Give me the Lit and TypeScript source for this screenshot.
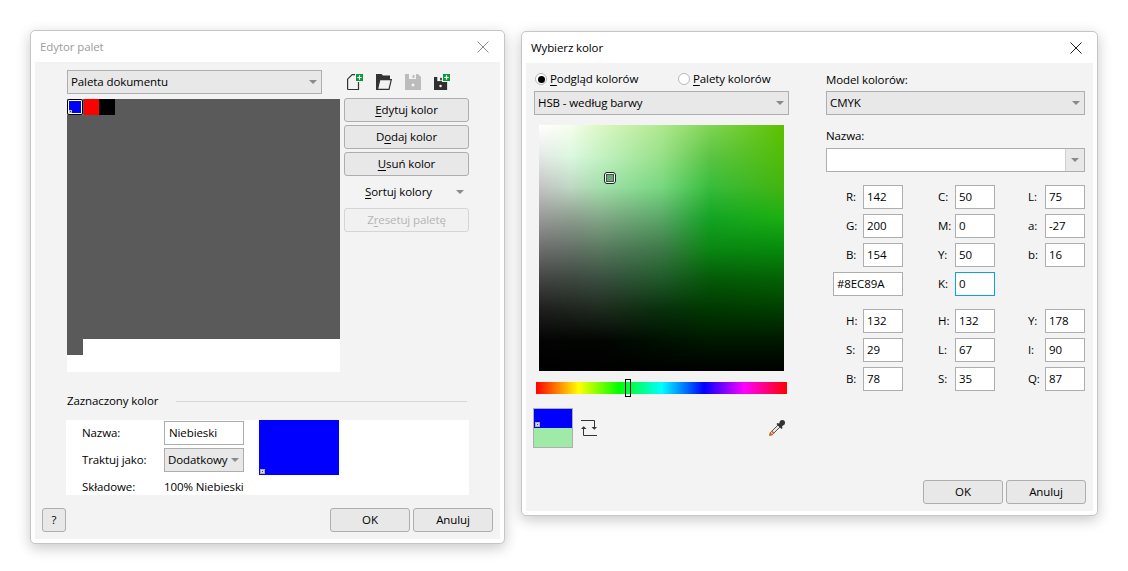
import { LitElement, html, css, svg } from 'lit';
import { customElement } from 'lit/decorators.js';

const closeIcon = (color: string) => html`<svg width="12" height="12" viewBox="0 0 12 12"><path d="M.5.5l11 11M11.5.5l-11 11" stroke=${color} fill="none"/></svg>`;

const plusBadge = svg`<rect x="9" y="0" width="7" height="7" fill="#0a9a3c"/><path d="M12.5 1.3v4.400M10.300 3.500h4.400" stroke="#fff" stroke-width="1.2"/>`;

const newIcon = html`<svg width="16" height="16" viewBox="0 0 16 16"><path d="M.6 15.500V5.200L5.200.6H8M11.500 8v7.500H.6" fill="none" stroke="#333" stroke-width="1.2"/>${plusBadge}</svg>`;
const openIcon = html`<svg width="16" height="16" viewBox="0 0 16 16"><path d="M0 16V0h5.500l1.500 1.500h7V5H4.500L2.500 16z" fill="#333"/><path d="M1.500 15.400L3.800 5.600h11.500l-2.300 9.800z" fill="#f3f3f3" stroke="#333" stroke-width="1.200"/></svg>`;
const floppy = (c: string, hole: string) => svg`<path d="M0 0h13l3 3v13H0z" fill=${c}/><rect x="4" y="0" width="7" height="5" fill=${hole}/><rect x="7.500" y="1" width="2" height="3" fill=${c}/><circle cx="8" cy="11" r="1.500" fill=${hole}/>`;
const saveIcon = html`<svg width="16" height="16" viewBox="0 0 16 16">${floppy('#bcbcbc', '#f3f3f3')}</svg>`;
const saveAsIcon = html`<svg width="16" height="16" viewBox="0 0 16 16"><g transform="translate(0 3) scale(.82)">${floppy('#2f2f2f', '#f3f3f3')}</g><rect x="8" y="0" width="8" height="8" fill="#f3f3f3"/>${plusBadge}</svg>`;

const swapIcon = html`<svg width="16" height="16" viewBox="0 0 16 16" fill="none" stroke="#333"><path d="M0 .5h13.500V7M16 15.500H2.500V9"/><path d="M10.500 7h5.500l-2.700 2.800zM0 9h5.500L2.700 6.200z" fill="#333" stroke="none"/></svg>`;
const pipetteIcon = html`<svg width="16" height="16" viewBox="0 0 16 16"><path d="M1 15l.7-2.800L9 5l2 2-7.300 7.300z" fill="#e4e4e4" stroke="#555"/><path d="M0 16l1-4 3 3z" fill="#d8611a"/><path d="M2 11.500l1-1 2.500 2.500-1 1z" fill="#d8611a"/><circle cx="13.300" cy="2.700" r="2.700" fill="#333"/><path d="M7.500 4l1-1 1.500.5 3-2.500 2.500 2.500-2.500 3 .5 1.500-1 1z" fill="#333"/></svg>`;

// colours read off the reference, interpolated across the picker square
const SV_XS = [0, 0.125, 0.25, 0.5, 0.7, 1];
const SV_ROWS: [number, string[]][] = [
  [0, ['ffffff', 'f6fdec', 'dcf6c4', 'b0e890', '80d454', '5cc000']],
  [0.125, ['e6e8e6', 'dcf8e0', 'c4f2c4', '98e088', '5cc444', '50bc08']],
  [0.25, ['c4c4c4', 'c0d8c4', 'a4e0ac', '78d880', '38bc3c', '44b410']],
  [0.375, ['9a9a9a', '8e9e90', '84a888', '5aa868', '14a424', '1cb012']],
  [0.5, ['6e6e6e', '667068', '5a7a60', '3f7a4a', '0a8812', '068c0c']],
  [0.625, ['444444', '3e4840', '3a4e40', '205a2a', '045a08', '046204']],
  [0.75, ['1e1e1e', '1e241e', '1e2a1e', '08300c', '003800', '003e00']],
  [0.88, ['030303', '020402', '020402', '001000', '001800', '001800']],
  [1, ['000000', '000000', '000000', '000000', '000000', '000000']],
];

function hexRgb(h: string): number[] {
  return [0, 2, 4].map((i) => parseInt(h.slice(i, i + 2), 16));
}

function segment(stops: number[], t: number): [number, number] {
  let i = 0;
  while (i < stops.length - 2 && t > stops[i + 1]) i++;
  return [i, (t - stops[i]) / (stops[i + 1] - stops[i])];
}

function paintSquare(canvas: HTMLCanvasElement) {
  const ctx = canvas.getContext('2d')!;
  const { width: w, height: h } = canvas;
  const img = ctx.createImageData(w, h);
  const grid = SV_ROWS.map((r) => r[1].map(hexRgb));
  const ys = SV_ROWS.map((r) => r[0]);
  for (let y = 0; y < h; y++) {
    const [ri, rt] = segment(ys, y / (h - 1));
    for (let x = 0; x < w; x++) {
      const [ci, ct] = segment(SV_XS, x / (w - 1));
      const p = (y * w + x) * 4;
      for (let k = 0; k < 3; k++) {
        const top = grid[ri][ci][k] * (1 - ct) + grid[ri][ci + 1][k] * ct;
        const bot = grid[ri + 1][ci][k] * (1 - ct) + grid[ri + 1][ci + 1][k] * ct;
        img.data[p + k] = top * (1 - rt) + bot * rt;
      }
      img.data[p + 3] = 255;
    }
  }
  ctx.putImageData(img, 0, 0);
}

@customElement('color-input')
export class ColorInput extends LitElement {
  static properties = { label: {}, value: {}, focused: { type: Boolean } };
  label = '';
  value = '';
  focused = false;

  static styles = css`
    :host {
      display: flex;
      justify-content: flex-end;
      align-items: center;
      height: 24px;
    }
    .lbl {
      width: 17px;
      white-space: nowrap;
    }
    .box {
      width: 40px;
      height: 24px;
      box-sizing: border-box;
      background: #fff;
      border: 1px solid #aeaeae;
      padding-left: 3px;
      line-height: 22px;
    }
    .box.focus {
      border-color: #0f9fe8;
    }
  `;

  render() {
    return html`<span class="lbl">${this.label}</span><div class="box ${this.focused ? 'focus' : ''}">${this.value}</div>`;
  }
}

@customElement('app-root')
export class AppRoot extends LitElement {
  static styles = css`
    :host {
      display: flex;
      align-items: flex-start;
      gap: 16px;
      width: 1128px;
      height: 571px;
      box-sizing: border-box;
      padding: 30px 0 0 30px;
      background: #fff;
      color: #000;
      font: 11.5px/16px 'Open Sans', 'Noto Sans', sans-serif;
      letter-spacing: -0.1px;
      overflow: hidden;
    }
    * {
      box-sizing: border-box;
    }
    u {
      text-underline-offset: 2px;
    }
    .dialog {
      flex: none;
      background: #fff;
      border: 1px solid #c6c6c6;
      border-radius: 5px;
      box-shadow: 0 4px 14px rgba(0, 0, 0, 0.22);
      padding: 0 4px 4px;
      display: flex;
      flex-direction: column;
    }
    .palette-dlg {
      width: 475px;
      height: 514px;
    }
    .picker-dlg {
      width: 577px;
      height: 485px;
      margin-top: 1px;
    }
    .title {
      height: 31px;
      flex: none;
      display: flex;
      align-items: center;
      justify-content: space-between;
      padding: 1px 11px 0 5px;
    }
    .title.off {
      color: #9c9c9c;
    }
    .body {
      flex: 1;
      background: #f3f3f3;
      position: relative;
      display: flex;
      flex-direction: column;
    }

    .btn,
    .select {
      background: #e8e8e8;
      border: 1px solid #aeaeae;
      height: 24px;
      display: flex;
      align-items: center;
    }
    .btn {
      width: 80px;
      justify-content: center;
      border-radius: 3px;
    }
    .btn.off {
      background: #f1f1f1;
      border-color: #d5d5d5;
      color: #b4b4b4;
    }
    .select {
      padding: 0 4px 0 3px;
      justify-content: space-between;
    }
    .arrow {
      width: 0;
      height: 0;
      border: 4px solid transparent;
      border-top: 4px solid #8a8a8a;
      border-bottom: 0;
      flex: none;
    }
    .footer {
      display: flex;
      gap: 3px;
      justify-content: flex-end;
    }

    /* palette editor */
    .palette-body {
      padding: 8px 7px 0 32px;
    }
    .pal-top {
      display: flex;
      gap: 4px;
    }
    .pal-left {
      width: 273px;
      flex: none;
    }
    .pal-left .select {
      width: 255px;
      margin-bottom: 5px;
    }
    .pal-grid {
      height: 273px;
      background: #fff;
      position: relative;
    }
    .pal-grey {
      height: 240px;
      background: #5a5a5a;
    }
    .pal-corner {
      width: 16px;
      height: 16px;
      background: #5a5a5a;
    }
    .swatches {
      position: absolute;
      top: 0;
      left: 0;
      display: flex;
    }
    .swatch {
      width: 16px;
      height: 16px;
    }
    .swatch.red {
      width: 15px;
      background: #f00;
    }
    .swatch.black {
      background: #000;
    }
    .swatch.sel {
      background: #00f;
      outline: 1px solid #000;
      outline-offset: -1px;
      border: 2px solid #fff;
      border-radius: 2px;
      position: relative;
      margin-right: 1px;
    }
    .mark {
      width: 5px;
      height: 5px;
      background: #d8d8d8;
      border: 1px solid #aaa;
      position: absolute;
      left: 1px;
      bottom: 1px;
      display: flex;
      align-items: center;
      justify-content: center;
    }
    .mark::after {
      content: '';
      width: 1px;
      height: 1px;
      background: #444;
    }
    .swatch .mark {
      width: 3px;
      height: 3px;
      left: 0;
      bottom: 0;
      border: 0;
      background: #bbb;
    }
    .pal-side {
      width: 125px;
      flex: none;
    }
    .tools {
      height: 27px;
      display: flex;
      align-items: flex-start;
      gap: 13px;
      padding: 4px 0 0 3px;
      margin-bottom: 1px;
    }
    .pal-side .btn {
      width: 125px;
      margin-bottom: 3px;
    }
    .sort {
      height: 26px;
      display: flex;
      align-items: center;
      justify-content: space-between;
      padding: 0 5px 0 21px;
      margin-bottom: 3px;
    }
    .section {
      display: flex;
      align-items: center;
      gap: 18px;
      width: 400px;
      height: 16px;
      margin-top: 21px;
    }
    .rule {
      flex: 1;
      height: 1px;
      background: #d8d8d8;
    }
    .selected {
      width: 403px;
      height: 75px;
      margin: 11px 0 0 -1px;
      background: #fff;
      display: grid;
      grid-template-columns: 82px 95px 80px;
      grid-template-rows: 25px 29px 21px;
      padding-left: 16px;
      align-items: center;
    }
    .field {
      height: 24px;
      width: 80px;
      background: #fff;
      border: 1px solid #aeaeae;
      padding-left: 4px;
      line-height: 22px;
      margin-top: 1px;
    }
    .selected .select {
      width: 80px;
      margin-top: 1px;
    }
    .big {
      grid-column: 3;
      grid-row: 1 / span 3;
      align-self: start;
      width: 80px;
      height: 55px;
      background: #00f;
      position: relative;
    }
    .compo {
      padding-top: 4px;
      white-space: nowrap;
    }
    .pal-foot {
      display: flex;
      justify-content: space-between;
      margin: 13px 0 0 -25px;
    }

    /* colour picker */
    .picker-body {
      padding: 0 7px 0 8px;
    }
    .picker-main {
      display: flex;
      gap: 37px;
      height: 417px;
    }
    .view {
      width: 255px;
      flex: none;
    }
    .radios {
      height: 28px;
      display: flex;
      align-items: center;
      padding: 4px 0 0 1px;
    }
    .radio {
      display: flex;
      align-items: center;
      gap: 3px;
      width: 143px;
      flex: none;
    }
    .dot {
      width: 12px;
      height: 12px;
      border-radius: 50%;
      border: 1px solid #b8b8b8;
      background: #fff;
      position: relative;
    }
    .dot.on::after {
      content: '';
      position: absolute;
      inset: 1.5px;
      border-radius: 50%;
      background: #000;
    }
    .sv {
      width: 245px;
      height: 246px;
      margin: 10px 0 0 5px;
      position: relative;
    }
    .sv canvas {
      display: block;
    }
    .handle {
      position: absolute;
      left: 65px;
      top: 47px;
      width: 12px;
      height: 12px;
      border-radius: 3px;
      border: 1px solid #222;
      background: #fff;
      display: flex;
      align-items: center;
      justify-content: center;
    }
    .handle::after {
      content: '';
      width: 6px;
      height: 6px;
      border: 1px solid #3c5a44;
      background: #6fa57b;
    }
    .hue {
      width: 251px;
      height: 12px;
      margin: 11px 0 0 2px;
      position: relative;
      background: linear-gradient(to right, #f00, #ff0 17%, #0f0 33%, #0ff 50%, #00f 67%, #f0f 83%, #f00);
    }
    .hue-mark {
      position: absolute;
      left: 89px;
      top: -3px;
      width: 6px;
      height: 18px;
      border: 1px solid #000;
    }
    .bottom {
      display: flex;
      align-items: center;
      margin: 14px 0 0 -1px;
    }
    .preview {
      width: 40px;
      height: 40px;
      border: 1px solid #aeaeae;
      background: linear-gradient(#00f 50%, #9eeaa6 50%);
      position: relative;
    }
    .preview .mark {
      bottom: 20px;
    }
    .swap {
      margin-left: 8px;
      height: 16px;
    }
    .pipette {
      margin-left: auto;
      margin-right: 4px;
      height: 16px;
    }
    .model {
      width: 259px;
      flex: none;
    }
    .cap {
      height: 28px;
      padding-top: 9px;
    }
    .model .select {
      margin-bottom: 12px;
    }
    .cap2 {
      height: 21px;
      padding-top: 1px;
    }
    .combo {
      height: 24px;
      background: #fff;
      border: 1px solid #aeaeae;
      display: flex;
      justify-content: flex-end;
    }
    .combo-btn {
      width: 19px;
      background: #e8e8e8;
      border-left: 1px solid #d0d0d0;
      display: flex;
      align-items: center;
      justify-content: center;
    }
    .values {
      display: grid;
      grid-template-columns: 77px 92px 90px;
      grid-auto-rows: 24px;
      row-gap: 5px;
      margin-top: 13px;
    }
    .hex {
      width: 70px;
      justify-self: end;
      height: 24px;
      background: #fff;
      border: 1px solid #aeaeae;
      padding-left: 3px;
      line-height: 22px;
    }
  `;

  firstUpdated() {
    paintSquare(this.renderRoot.querySelector('canvas') as HTMLCanvasElement);
  }

  renderPaletteEditor() {
    return html`
      <div class="dialog palette-dlg">
        <div class="title off"><span>Edytor palet</span>${closeIcon('#8c8c8c')}</div>
        <div class="body palette-body">
          <div class="pal-top">
            <div class="pal-left">
              <div class="select"><span>Paleta dokumentu</span><i class="arrow"></i></div>
              <div class="pal-grid">
                <div class="pal-grey"></div>
                <div class="pal-corner"></div>
                <div class="swatches">
                  <div class="swatch sel"><i class="mark"></i></div>
                  <div class="swatch red"></div>
                  <div class="swatch black"></div>
                </div>
              </div>
            </div>
            <div class="pal-side">
              <div class="tools">${newIcon}${openIcon}${saveIcon}${saveAsIcon}</div>
              <div class="btn"><span><u>E</u>dytuj kolor</span></div>
              <div class="btn"><span>D<u>o</u>daj kolor</span></div>
              <div class="btn"><span><u>U</u>suń kolor</span></div>
              <div class="sort"><span><u>S</u>ortuj kolory</span><i class="arrow"></i></div>
              <div class="btn off"><span>Z<u>r</u>esetuj paletę</span></div>
            </div>
          </div>
          <div class="section"><span>Zaznaczony kolor</span><div class="rule"></div></div>
          <div class="selected">
            <span>Nazwa:</span>
            <div class="field">Niebieski</div>
            <div class="big"><i class="mark"></i></div>
            <span>Traktuj jako:</span>
            <div class="select"><span>Dodatkowy</span><i class="arrow"></i></div>
            <span class="compo">Składowe:</span>
            <span class="compo">100% Niebieski</span>
          </div>
          <div class="pal-foot">
            <div class="btn" style="width:24px">?</div>
            <div class="footer"><div class="btn">OK</div><div class="btn">Anuluj</div></div>
          </div>
        </div>
      </div>
    `;
  }

  renderPicker() {
    const rows = [
      ['R:', '142', 'C:', '50', 'L:', '75'],
      ['G:', '200', 'M:', '0', 'a:', '-27'],
      ['B:', '154', 'Y:', '50', 'b:', '16'],
    ];
    const rows2 = [
      ['H:', '132', 'H:', '132', 'Y:', '178'],
      ['S:', '29', 'L:', '67', 'I:', '90'],
      ['B:', '78', 'S:', '35', 'Q:', '87'],
    ];
    const cells = (r: string[]) => html`
      <color-input .label=${r[0]} .value=${r[1]}></color-input>
      <color-input .label=${r[2]} .value=${r[3]}></color-input>
      <color-input .label=${r[4]} .value=${r[5]}></color-input>
    `;
    return html`
      <div class="dialog picker-dlg">
        <div class="title"><span>Wybierz kolor</span>${closeIcon('#222')}</div>
        <div class="body picker-body">
          <div class="picker-main">
            <div class="view">
              <div class="radios">
                <label class="radio"><i class="dot on"></i><span><u>P</u>odgląd kolorów</span></label>
                <label class="radio"><i class="dot"></i><span><u>P</u>alety kolorów</span></label>
              </div>
              <div class="select"><span>HSB - według barwy</span><i class="arrow"></i></div>
              <div class="sv"><canvas width="245" height="246"></canvas><div class="handle"></div></div>
              <div class="hue"><div class="hue-mark"></div></div>
              <div class="bottom">
                <div class="preview"><i class="mark"></i></div>
                <span class="swap">${swapIcon}</span>
                <span class="pipette">${pipetteIcon}</span>
              </div>
            </div>
            <div class="model">
              <div class="cap">Model kolorów:</div>
              <div class="select"><span>CMYK</span><i class="arrow"></i></div>
              <div class="cap2">Nazwa:</div>
              <div class="combo"><div class="combo-btn"><i class="arrow"></i></div></div>
              <div class="values">
                ${rows.map(cells)}
                <div class="hex">#8EC89A</div>
                <color-input .label=${'K:'} .value=${'0'} .focused=${true}></color-input>
              </div>
              <div class="values">${rows2.map(cells)}</div>
            </div>
          </div>
          <div class="footer"><div class="btn">OK</div><div class="btn">Anuluj</div></div>
        </div>
      </div>
    `;
  }

  render() {
    return html`${this.renderPaletteEditor()}${this.renderPicker()}`;
  }
}
